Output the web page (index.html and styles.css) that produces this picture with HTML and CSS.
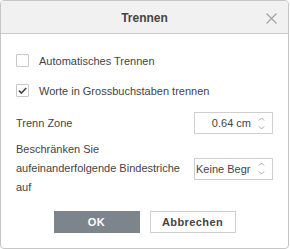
FILE: index.html
```html
<!DOCTYPE html>
<html>
<head>
  <meta charset="UTF-8">
  <link rel="stylesheet" href="styles.css">
</head>
<body>
  <div class="dialog">
    <div class="dialog-header">
      <span class="dialog-title">Trennen</span>
      <button class="close-button" id="closeButton">
        <svg width="11" height="11" viewBox="0 0 11 11">
          <path d="M0.5 0.5 L10.5 10.5 M10.5 0.5 L0.5 10.5" stroke="#a2a2a2" stroke-width="1.2" fill="none"/>
        </svg>
      </button>
    </div>

    <div class="dialog-body">
      <label class="check-row">
        <span class="checkbox"></span>
        Automatisches Trennen
      </label>
      <label class="check-row row-caps">
        <span class="checkbox checked">
          <svg width="11" height="11" viewBox="0 0 11 11">
            <path d="M2 5.6 L4.4 8 L9.2 3" stroke="#444" stroke-width="1.6" fill="none"/>
          </svg>
        </span>
        Worte in Grossbuchstaben trennen
      </label>

      <div class="field-row row-zone">
        <span class="field-label">Trenn Zone</span>
        <div class="spin">
          <input class="spin-input align-right" type="text" value="0.64 cm">
          <span class="spin-arrows">
            <svg width="7" height="4" viewBox="0 0 7 4"><path d="M1 3.5 L3.5 1 L6 3.5" stroke="#a5a5a5" fill="none"/></svg>
            <svg width="7" height="4" viewBox="0 0 7 4"><path d="M1 0.5 L3.5 3 L6 0.5" stroke="#a5a5a5" fill="none"/></svg>
          </span>
        </div>
      </div>

      <div class="field-row row-limit">
        <span class="field-label wrap">Beschränken Sie aufeinanderfolgende Bindestriche auf</span>
        <div class="spin">
          <input class="spin-input" type="text" value="Keine Begrenzung">
          <span class="spin-arrows">
            <svg width="7" height="4" viewBox="0 0 7 4"><path d="M1 3.5 L3.5 1 L6 3.5" stroke="#a5a5a5" fill="none"/></svg>
            <svg width="7" height="4" viewBox="0 0 7 4"><path d="M1 0.5 L3.5 3 L6 0.5" stroke="#a5a5a5" fill="none"/></svg>
          </span>
        </div>
      </div>

      <div class="button-row">
        <button class="dlg-button primary">OK</button>
        <button class="dlg-button">Abbrechen</button>
      </div>
    </div>
  </div>
</body>
</html>
```

FILE: styles.css
```css
body {
  margin: 0;
  padding: 0;
  font-family: "Liberation Sans", Arial, sans-serif;
  font-size: 11px;
  color: #444;
  background-color: white;
}
.dialog {
  width: 289px;
  height: 249px;
  box-sizing: border-box;
  border: 1px solid #c6c6c6;
  border-radius: 4px;
  overflow: hidden;
  background-color: white;
}
.dialog-header {
  display: grid;
  grid-template-columns: 1fr auto 1fr;
  align-items: center;
  height: 32px;
  background-color: #f1f1f1;
  border-bottom: 1px solid #cbcbcb;
}
.dialog-title {
  grid-column: 2;
  font-size: 12px;
  font-weight: bold;
  color: #444;
  padding-top: 1px;
}
.close-button {
  grid-column: 3;
  justify-self: end;
  margin-right: 11px;
  margin-top: 2px;
  padding: 0;
  background: none;
  border: none;
  width: 11px;
  height: 11px;
  display: flex;
  cursor: pointer;
}
.dialog-body {
  display: flex;
  flex-direction: column;
  padding: 20px 15px 0 15px;
}
.check-row {
  display: flex;
  align-items: center;
  gap: 10px;
  height: 13px;
  cursor: pointer;
}
.row-caps {
  margin-top: 17px;
}
.checkbox {
  width: 13px;
  height: 13px;
  box-sizing: border-box;
  border: 1px solid #c8c8c8;
  border-radius: 1px;
  display: flex;
  align-items: center;
  justify-content: center;
  flex-shrink: 0;
}
.field-row {
  display: flex;
  align-items: center;
  justify-content: space-between;
}
.row-zone {
  margin-top: 15px;
}
.row-limit {
  margin-top: 6px;
}
.field-label {
  line-height: 19px;
}
.field-label.wrap {
  width: 170px;
}
.spin {
  display: flex;
  align-items: center;
  width: 79px;
  height: 22px;
  box-sizing: border-box;
  border: 1px solid #cfcfcf;
}
.spin-input {
  flex: 1;
  min-width: 0;
  height: 100%;
  border: none;
  outline: none;
  padding: 0 0 0 1px;
  font-family: inherit;
  font-size: 11px;
  color: #444;
  background: none;
}
.align-right {
  text-align: right;
}
.spin-arrows {
  width: 21px;
  display: flex;
  flex-direction: column;
  align-items: center;
  gap: 5px;
}
.spin-arrows svg {
  display: block;
}
.button-row {
  display: flex;
  justify-content: center;
  gap: 10px;
  margin-top: 14px;
}
.dlg-button {
  width: 86px;
  height: 22px;
  box-sizing: border-box;
  border: 1px solid #cfcfcf;
  background-color: white;
  color: #444;
  font-family: inherit;
  font-size: 11px;
  font-weight: bold;
  letter-spacing: 0.4px;
  cursor: pointer;
}
.dlg-button.primary {
  background-color: #7d858c;
  border-color: #7d858c;
  color: white;
}
```
